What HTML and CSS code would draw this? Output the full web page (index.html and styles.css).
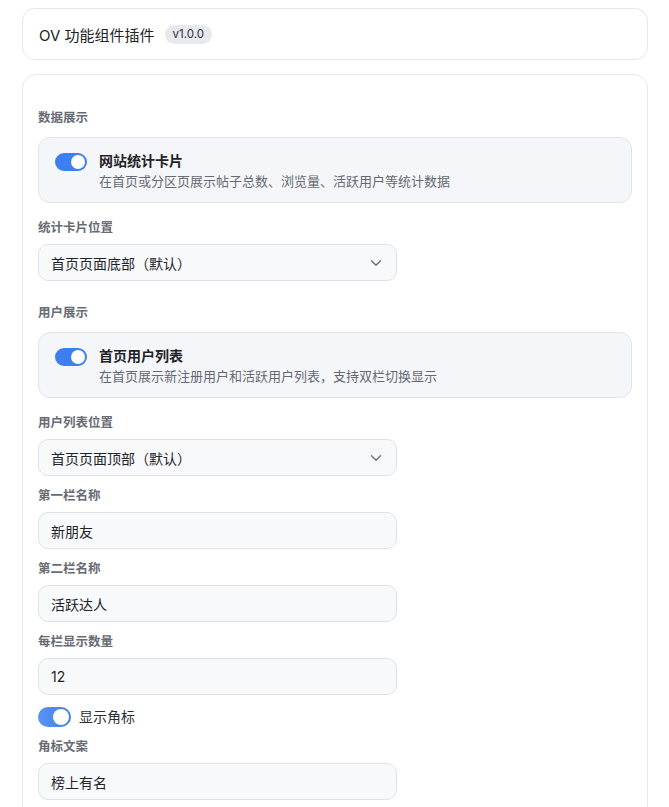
FILE: index.html
```html
<!DOCTYPE html>
<html lang="zh-CN">

<head>
    <meta charset="UTF-8">
    <meta name="viewport" content="width=device-width, initial-scale=1.0">
    <title>OV 功能组件插件</title>
    <link rel="stylesheet" href="styles.css">
</head>

<body>
    <div class="page">
        <div class="header-card">
            <span class="plugin-title">OV 功能组件插件</span>
            <span class="version">v1.0.0</span>
        </div>

        <div class="settings-card">
            <div class="section-title first">数据展示</div>
            <label class="toggle-card">
                <span class="switch on"><span class="knob"></span></span>
                <span class="toggle-text">
                    <span class="toggle-name">网站统计卡片</span>
                    <span class="toggle-desc">在首页或分区页展示帖子总数、浏览量、活跃用户等统计数据</span>
                </span>
            </label>

            <div class="field">
                <div class="field-label">统计卡片位置</div>
                <div class="select">
                    <span>首页页面底部（默认）</span>
                    <svg class="chevron" width="12" height="8" viewBox="0 0 12 8">
                        <path d="M1.5 1.8 6 6.2 10.5 1.8" fill="none" stroke="#6b7280" stroke-width="1.4" stroke-linecap="round" stroke-linejoin="round" />
                    </svg>
                </div>
            </div>

            <div class="section-title">用户展示</div>
            <label class="toggle-card">
                <span class="switch on"><span class="knob"></span></span>
                <span class="toggle-text">
                    <span class="toggle-name">首页用户列表</span>
                    <span class="toggle-desc">在首页展示新注册用户和活跃用户列表，支持双栏切换显示</span>
                </span>
            </label>

            <div class="field">
                <div class="field-label">用户列表位置</div>
                <div class="select">
                    <span>首页页面顶部（默认）</span>
                    <svg class="chevron" width="12" height="8" viewBox="0 0 12 8">
                        <path d="M1.5 1.8 6 6.2 10.5 1.8" fill="none" stroke="#6b7280" stroke-width="1.4" stroke-linecap="round" stroke-linejoin="round" />
                    </svg>
                </div>
            </div>

            <div class="field compact">
                <div class="field-label">第一栏名称</div>
                <div class="text-input">新朋友</div>
            </div>

            <div class="field compact">
                <div class="field-label">第二栏名称</div>
                <div class="text-input">活跃达人</div>
            </div>

            <div class="field compact">
                <div class="field-label">每栏显示数量</div>
                <div class="text-input">12</div>
            </div>

            <label class="inline-toggle">
                <span class="switch small on"><span class="knob"></span></span>
                <span>显示角标</span>
            </label>

            <div class="field compact">
                <div class="field-label">角标文案</div>
                <div class="text-input">榜上有名</div>
            </div>
        </div>
    </div>
</body>

</html>
```

FILE: styles.css
```css
body {
    margin: 0;
    font-family: Inter, "Noto Sans CJK SC", sans-serif;
    color: #1f2329;
    background-color: #fff;
}

.page {
    padding: 8px 21px 0 22px;
}

.header-card {
    display: flex;
    align-items: center;
    height: 52px;
    box-sizing: border-box;
    padding: 0 16px;
    border: 1px solid #e6e7eb;
    border-radius: 13px;
    background: #fff;
}

.plugin-title {
    font-size: 15px;
    color: #222;
}

.version {
    margin-left: 10px;
    padding: 1px 8px;
    border-radius: 10px;
    background: #e8e9ee;
    font-size: 11.5px;
    line-height: 17px;
    color: #2b2f36;
}

.settings-card {
    margin-top: 14px;
    padding: 34px 15px 30px;
    border: 1px solid #e6e7eb;
    border-radius: 14px;
    background: #fff;
}

.section-title {
    margin-top: 23px;
    margin-bottom: 10px;
    font-size: 12.5px;
    font-weight: 600;
    line-height: 18px;
    color: #676c74;
}

.section-title.first {
    margin-top: 0;
}

.toggle-card {
    display: flex;
    align-items: flex-start;
    gap: 12px;
    height: 66px;
    box-sizing: border-box;
    padding: 13px 16px;
    border: 1px solid #e2e4ea;
    border-radius: 12px;
    background: #f5f6f9;
}

.switch {
    position: relative;
    flex: none;
    width: 32px;
    height: 18px;
    margin-top: 2px;
    border-radius: 9px;
    background: #c9ccd3;
}

.switch.on {
    background: #3d7ff0;
}

.knob {
    position: absolute;
    top: 2px;
    left: 2px;
    width: 14px;
    height: 14px;
    border-radius: 50%;
    background: #fff;
}

.switch.on .knob {
    left: 16px;
}

.switch.small {
    width: 33px;
    height: 20px;
    margin-top: 0;
    border-radius: 10px;
    background: linear-gradient(90deg, #5b93f2, #3d7ff0);
}

.switch.small .knob {
    top: 2px;
    left: 15px;
    width: 16px;
    height: 16px;
}

.toggle-text {
    display: flex;
    flex-direction: column;
}

.toggle-name {
    font-size: 14px;
    font-weight: 700;
    line-height: 20px;
    color: #1f2329;
}

.toggle-desc {
    font-size: 13px;
    line-height: 20px;
    color: #646a73;
}

.field {
    margin-top: 16px;
}

.field.compact {
    margin-top: 11px;
}

.field-label {
    margin-bottom: 7px;
    font-size: 12.5px;
    font-weight: 600;
    line-height: 18px;
    color: #676c74;
}

.select,
.text-input {
    display: flex;
    align-items: center;
    width: 359px;
    height: 37px;
    box-sizing: border-box;
    padding: 0 12px;
    border: 1px solid #dfe2e8;
    border-radius: 10px;
    background: #f8f9fb;
    font-size: 14px;
    color: #1f2329;
}

.select {
    justify-content: space-between;
    padding-right: 14px;
}

.inline-toggle {
    display: flex;
    align-items: center;
    gap: 8px;
    margin-top: 12px;
    font-size: 14px;
    line-height: 20px;
    color: #2b2f36;
}
```
